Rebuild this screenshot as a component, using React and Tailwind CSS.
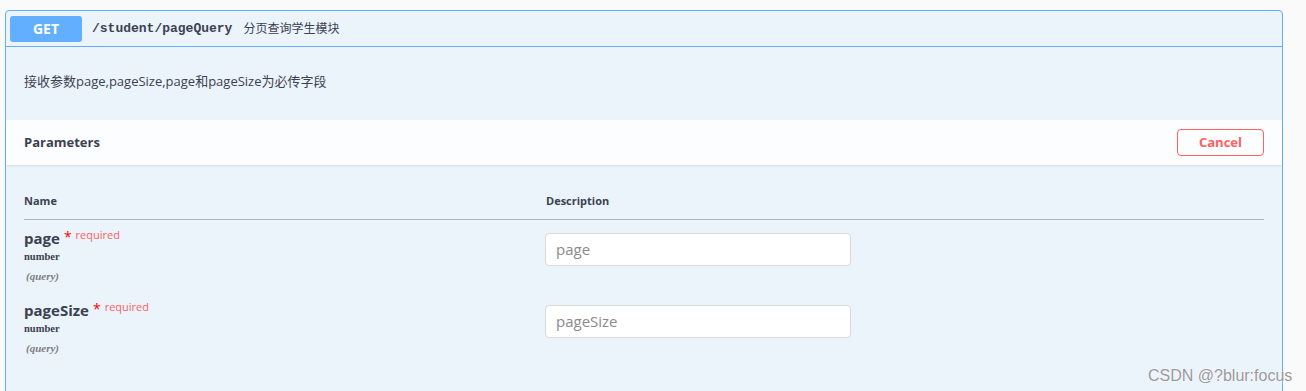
const params = [
  { name: 'page', type: 'number', location: 'query' },
  { name: 'pageSize', type: 'number', location: 'query' },
];

const sans = { fontFamily: '"Open Sans", "Noto Sans CJK SC", sans-serif' };

function ParamRow({ param }) {
  return (
    <div className="flex h-[72px] items-start">
      <div className="w-[521px] pt-[7px]">
        <div className="flex items-start">
          <span className="text-[15px] font-bold leading-[22px] text-[#3b4151]">{param.name}</span>
          <span className="ml-[4px] text-[14px] leading-[20px] text-[#ff0000]">*</span>
          <span className="ml-[4px] text-[11px] leading-[16px] text-[#ff6060]">required</span>
        </div>
        <div className="text-[10.5px] font-semibold leading-[16px] text-[#3b4151] [font-family:'Liberation_Serif',serif]">
          {param.type}
        </div>
        <div className="pl-[2px] pt-[2px] text-[11px] font-semibold italic leading-[18px] text-[#808080] [font-family:'Liberation_Serif',serif]">
          ({param.location})
        </div>
      </div>
      <div className="pt-[13px]">
        <input
          type="text"
          placeholder={param.name}
          className="h-[33px] w-[306px] rounded-[4px] border border-[#d9d9d9] bg-white px-[10px] pb-[2px] text-[15px] text-[#3b4151] placeholder:text-[#8a8a8a] focus:outline-none"
        />
      </div>
    </div>
  );
}

export default function App() {
  return (
    <div className="relative h-[391px] overflow-hidden bg-[#fafafa] pl-[5px] pr-[23px] pt-[10px]" style={sans}>
      <div className="h-[400px] rounded-[4px] border border-[#61affe] bg-[#ebf3fb]">
        <div className="flex h-[36px] items-center border-b border-[#61affe] px-[4px]">
          <div className="flex h-[26px] w-[72px] items-center justify-center rounded-[3px] bg-[#61affe] text-[14px] font-bold text-white">
            GET
          </div>
          <span className="ml-[10px] text-[13px] font-bold text-[#3b4151] [font-family:'Liberation_Mono',monospace]">
            /student/pageQuery
          </span>
          <span className="ml-[11px] text-[12px] text-[#3b4151]">分页查询学生模块</span>
        </div>

        <div className="h-[73px] px-[18px] pt-[24px] text-[13px] leading-[20px] text-[#3b4151]">
          接收参数page,pageSize,page和pageSize为必传字段
        </div>

        <div className="flex h-[45px] items-center justify-between bg-[#fcfdff] px-[18px] shadow-[0_1px_2px_rgba(0,0,0,0.1)]">
          <h4 className="text-[13px] font-bold text-[#3b4151]">Parameters</h4>
          <button
            type="button"
            className="h-[27px] w-[87px] rounded-[4px] border border-[#ff6060] bg-transparent text-[13px] font-bold text-[#ff6060]"
          >
            Cancel
          </button>
        </div>

        <div className="px-[18px]">
          <div className="flex h-[55px] items-end border-b border-[#aeb6c4] pb-[10px] text-[11px] font-bold text-[#3b4151]">
            <div className="w-[522px]">Name</div>
            <div>Description</div>
          </div>
          {params.map((param) => (
            <ParamRow key={param.name} param={param} />
          ))}
        </div>
      </div>

      <div className="absolute left-[1148px] top-[364px] text-[16px] text-[#9a9a9a] [font-family:'Liberation_Sans',sans-serif] [text-shadow:0_0_2px_#fff]">
        CSDN @?blur:focus
      </div>
    </div>
  );
}
